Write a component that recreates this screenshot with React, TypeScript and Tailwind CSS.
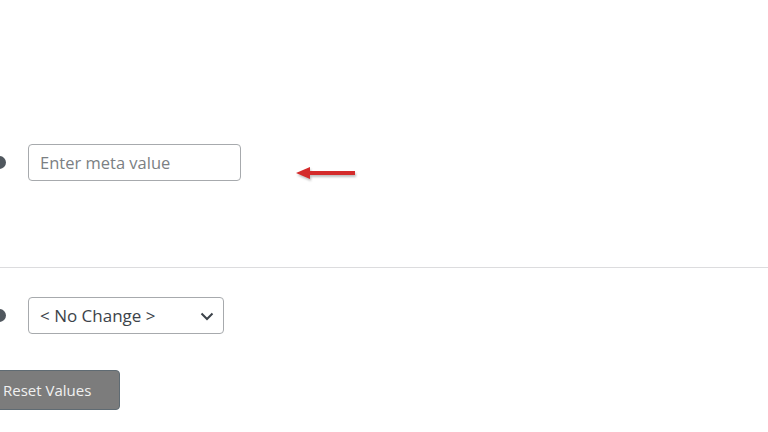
import React from 'react'

function HelpDot({ className = '' }: { className?: string }) {
  return <span className={`ml-[-7px] block h-[13px] w-[13px] shrink-0 rounded-full bg-[#50575e] ${className}`} aria-hidden />
}

function RedArrow() {
  return (
    <svg width="64" height="18" viewBox="0 0 64 18" className="drop-shadow-[1px_2px_1px_rgba(0,0,0,0.25)]" aria-hidden>
      <path d="M13 7 H60 V11 H13 Z" fill="#d42b2b" />
      <path d="M1 9 L15 3 L15 15 Z" fill="#d42b2b" />
    </svg>
  )
}

export default function App() {
  return (
    <div
      className="h-[432px] w-[768px] overflow-hidden bg-white text-[#2c3338]"
      style={{ fontFamily: '"Open Sans", "Noto Sans", sans-serif' }}
    >
      {/* Meta value row */}
      <div className="flex items-start pt-[144px]">
        <HelpDot className="mt-[12px]" />
        <input
          className="ml-[22px] h-[37px] w-[213px] rounded-[4px] border border-[#a7aaad] px-[11px] text-[16.5px] text-[#2c3338] outline-none placeholder:text-[#7b7f83]"
          placeholder="Enter meta value"
        />
        <div className="ml-[54px] mt-[20px]">
          <RedArrow />
        </div>
      </div>

      <div className="mt-[85px] h-px bg-[#dcdcde]" />

      {/* Change row */}
      <div className="flex items-center pt-[29px]">
        <HelpDot />
        <div className="relative ml-[22px] flex h-[37px] w-[196px] items-center rounded-[4px] border border-[#a7aaad] pl-[11px] text-[17px] text-[#3c434a]">
          <span>&lt; No Change &gt;</span>
          <svg className="absolute right-[9px] top-[14px]" width="14" height="9" viewBox="0 0 14 9" aria-hidden>
            <path d="M1.5 1.5 L7 7 L12.5 1.5" fill="none" stroke="#3c434a" strokeWidth="2" />
          </svg>
        </div>
      </div>

      <div className="pt-[36px]">
        <button className="ml-[-6px] h-[40px] w-[126px] rounded-[4px] border border-[#5f6b73] bg-[#7c7c7c] pl-[6px] text-left text-[15px] text-[#f0f0f0]">
          <span className="ml-[2px]">Reset Values</span>
        </button>
      </div>
    </div>
  )
}
